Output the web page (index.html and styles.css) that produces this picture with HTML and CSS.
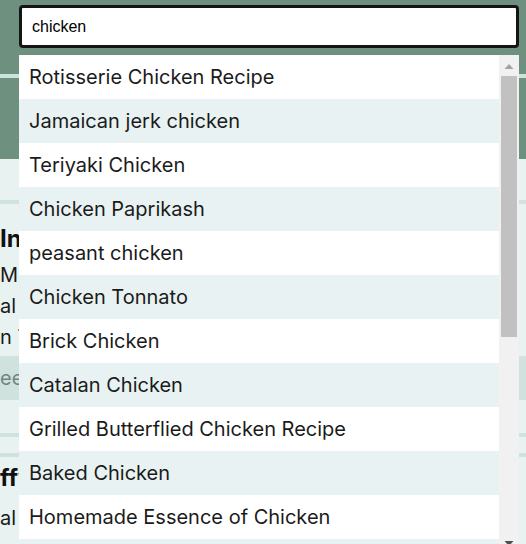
FILE: index.html
```html
<!DOCTYPE html>
<html lang="en">
<head>
<meta charset="utf-8">
<title>Recipe search</title>
<link rel="stylesheet" href="styles.css">
</head>
<body>
<header class="top">
  <div class="top-line"></div>
</header>
<main class="feed">
  <article class="card card-first">
    <h2 class="card-title">Instant Pot Chicken Curry</h2>
    <p class="card-line">Minutes: 45</p>
    <p class="card-line">al - 4 servings</p>
    <p class="card-line">n Tags: dinner</p>
    <div class="card-tag">ee-free</div>
  </article>
  <article class="card card-second">
    <h2 class="card-title">ffy Pancakes</h2>
    <p class="card-line card-line-gap">al - 2 servings</p>
  </article>
</main>

<div class="search">
  <input class="search-input" type="text" value="chicken" aria-label="Search recipes">
  <div class="results-box">
    <ul class="results" role="listbox">
      <li class="result">Rotisserie Chicken Recipe</li>
      <li class="result">Jamaican jerk chicken</li>
      <li class="result">Teriyaki Chicken</li>
      <li class="result">Chicken Paprikash</li>
      <li class="result">peasant chicken</li>
      <li class="result">Chicken Tonnato</li>
      <li class="result">Brick Chicken</li>
      <li class="result">Catalan Chicken</li>
      <li class="result">Grilled Butterflied Chicken Recipe</li>
      <li class="result">Baked Chicken</li>
      <li class="result">Homemade Essence of Chicken</li>
      <li class="result">Chicken Marsala</li>
      <li class="result">Lemon Chicken</li>
      <li class="result">Chicken Cacciatore</li>
    </ul>
    <div class="scrollbar" aria-hidden="true">
      <div class="sb-btn">
        <svg width="20" height="20" viewBox="0 0 20 20"><path d="M5.5 14 L10 9 L14.5 14 Z" fill="#a3a3a3"/></svg>
      </div>
      <div class="sb-thumb"></div>
      <div class="sb-rest"></div>
      <div class="sb-btn">
        <svg width="20" height="20" viewBox="0 0 20 20"><path d="M5.5 6 L14.5 6 L10 11 Z" fill="#505050"/></svg>
      </div>
    </div>
  </div>
</div>
</body>
</html>
```

FILE: styles.css
```css
html, body {
  margin: 0;
  padding: 0;
}

body {
  background: #e8f2f1;
  font-family: Inter, "Noto Sans", sans-serif;
  color: #111;
  overflow: hidden;
}

.top {
  height: 159px;
  background: #6e917f;
  padding-top: 74px;
  box-sizing: border-box;
}

.top-line {
  height: 4px;
  background: #cfe3de;
}

.feed {
  padding-top: 41px;
  display: flex;
  flex-direction: column;
  gap: 16px;
}

.card {
  border-top: 4px solid #cfe3de;
  border-bottom: 4px solid #cfe3de;
  white-space: nowrap;
}

.card-first {
  padding: 20px 0 33px;
}

.card-second {
  padding: 6px 0 20px;
}

.card-title {
  margin: 0;
  font-size: 24px;
  line-height: 30px;
  font-weight: 700;
  color: #111;
}

.card-line {
  margin: 0;
  font-size: 20px;
  line-height: 31px;
  color: #1a1a1a;
}

.card-first .card-title {
  margin-bottom: 6px;
}

.card-line-gap {
  margin-top: 10px;
}

.card-tag {
  margin-top: 3px;
  height: 44px;
  line-height: 44px;
  background: #cfe2dd;
  color: #6f8580;
  font-size: 20px;
}

.search {
  position: absolute;
  top: 5px;
  left: 19px;
  width: 500px;
}

.search-input {
  display: block;
  width: 100%;
  height: 43px;
  box-sizing: border-box;
  margin: 0;
  border: 3px solid #151515;
  border-radius: 4px;
  padding: 0 10px;
  background: #fff;
  font-family: "Liberation Sans", Arial, sans-serif;
  font-size: 16px;
  color: #000;
  outline: none;
}

.results-box {
  margin-top: 7px;
  height: 500px;
  display: flex;
  background: #fff;
}

.results {
  flex: 1;
  list-style: none;
  margin: 0;
  padding: 0;
  overflow: hidden;
}

.result {
  height: 44px;
  line-height: 44px;
  padding: 0 10px;
  font-size: 20px;
  color: #1b1b1b;
  white-space: nowrap;
  background: #fff;
}

.result:nth-child(even) {
  background: #e9f2f2;
}

.scrollbar {
  width: 20px;
  background: #f1f1f1;
  display: flex;
  flex-direction: column;
}

.sb-btn {
  height: 20px;
  flex: none;
}

.sb-btn svg {
  display: block;
}

.sb-thumb {
  height: 261px;
  margin: 1px 2px 0 2px;
  background: #c1c1c1;
  flex: none;
}

.sb-rest {
  flex: 1;
}
```
